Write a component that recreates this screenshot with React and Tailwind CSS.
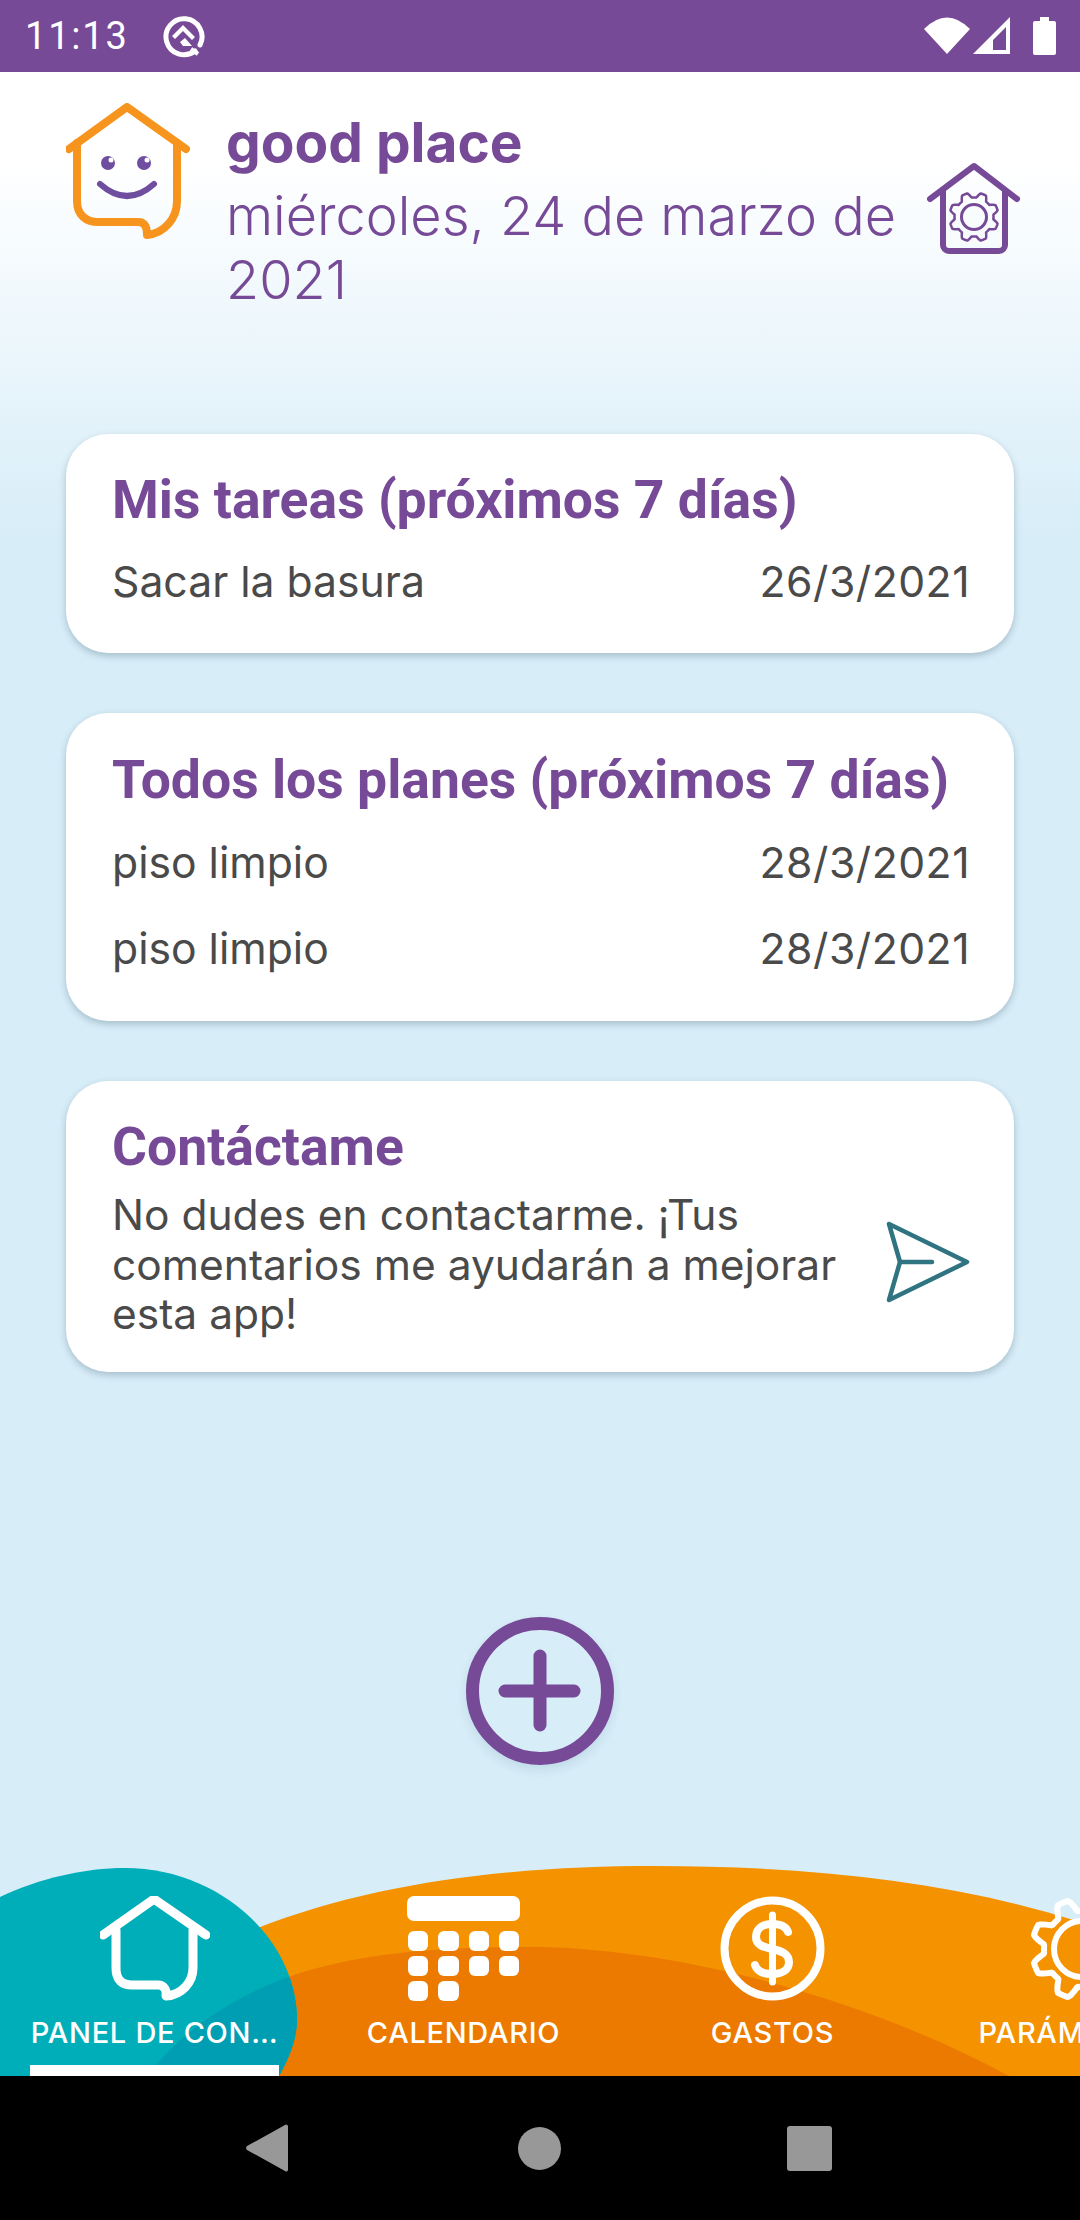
import React from 'react'

const gearPath = (cx, cy, r, amp, teeth) => {
  const pts = []
  for (let i = 0; i < 200; i++) {
    const a = (i / 200) * Math.PI * 2
    const wave = Math.max(-1, Math.min(1, 1.7 * Math.cos(teeth * a + Math.PI)))
    const rad = r + amp * wave
    pts.push(`${(cx + rad * Math.cos(a)).toFixed(2)} ${(cy + rad * Math.sin(a)).toFixed(2)}`)
  }
  return `M${pts.join('L')}Z`
}

const StatusBar = () => (
  <div className="h-[72px] shrink-0 bg-[#764a97] flex items-center text-white">
    <span className="ml-[25px] font-['Roboto'] text-[38px] leading-none tracking-[1.8px]">11:13</span>
    <svg className="ml-[33px]" width="44" height="44" viewBox="0 0 44 44" fill="none">
      <path d="M33 37A18 18 0 1 1 38 31" stroke="white" strokeWidth="5" strokeLinecap="round" />
      <path d="M29 35l7 5" stroke="white" strokeWidth="4" />
      <path d="M10 22L21 11l12 12-3 3-9-9-8 8z" fill="white" />
      <path d="M18 28l5-4 7 8H21z" fill="white" />
    </svg>
    <div className="ml-auto mr-[24px] flex items-center">
      <svg width="46" height="38" viewBox="0 0 46 38"><path d="M23 37L0 12Q23-11 46 12Z" fill="white" /></svg>
      <svg className="ml-[3px]" width="38" height="38" viewBox="0 0 38 38">
        <path fillRule="evenodd" d="M0 37L37 0V37ZM20 33H33V10L20 23Z" fill="white" />
      </svg>
      <svg className="ml-[22px]" width="23" height="38" viewBox="0 0 23 38">
        <path d="M7 0H16V4H21a2 2 0 0 1 2 2V36a2 2 0 0 1-2 2H2a2 2 0 0 1-2-2V6a2 2 0 0 1 2-2H7Z" fill="white" />
      </svg>
    </div>
  </div>
)

const Logo = () => (
  <svg width="124" height="138" viewBox="66 100 124 138" fill="none" className="shrink-0">
    <path d="M69 146L127 104L186 146" stroke="#f7941d" strokeWidth="8" strokeLinecap="round" strokeLinejoin="round" />
    <path d="M77 140V198C77 212 86 219 98 219H138C146 219 147 226 147 232C165 230 177 215 177 198V140" stroke="#f7941d" strokeWidth="8" strokeLinecap="round" strokeLinejoin="round" />
    <circle cx="108" cy="160" r="7" fill="#6f4ea0" />
    <circle cx="144" cy="160" r="7" fill="#6f4ea0" />
    <circle cx="111" cy="157" r="2.5" fill="white" />
    <circle cx="147" cy="157" r="2.5" fill="white" />
    <path d="M100 181Q127 205 154 181" stroke="#6f4ea0" strokeWidth="6" strokeLinecap="round" />
  </svg>
)

const SettingsHome = () => (
  <svg width="94" height="94" viewBox="927 161 94 94" fill="none" className="shrink-0">
    <path d="M930 198L974 165L1017 198" stroke="#764a97" strokeWidth="6" strokeLinecap="round" strokeLinejoin="round" />
    <path d="M943 190V244a6 6 0 0 0 6 6H999a6 6 0 0 0 6-6V190" stroke="#764a97" strokeWidth="6" />
    <path d={gearPath(974, 216, 22, 2.5, 8)} stroke="#764a97" strokeWidth="2.5" strokeLinejoin="round" />
    <circle cx="974" cy="216" r="12.5" stroke="#764a97" strokeWidth="3" />
  </svg>
)

const Card = ({ title, className, children }) => (
  <div className={`mx-[66px] rounded-[42px] bg-white pl-[46px] pr-[44px] shadow-[0_3px_7px_rgba(40,70,90,0.28)] ${className}`}>
    <h2 className="font-['Roboto'] text-[53.5px] leading-[56px] font-bold text-[#764a97] whitespace-nowrap">{title}</h2>
    {children}
  </div>
)

const Row = ({ label, date, className }) => (
  <div className={`flex justify-between font-['Inter'] text-[42.7px] leading-[48px] text-[#4a4a4a] ${className}`}>
    <span>{label}</span>
    <span className="tracking-[0.5px]">{date}</span>
  </div>
)

const HomeTabIcon = () => (
  <svg width="110" height="105" viewBox="100 1896 110 105" fill="none">
    <path d="M103 1935L154 1899L206 1935" stroke="white" strokeWidth="9" strokeLinecap="round" strokeLinejoin="round" />
    <path d="M116 1930V1968C116 1980 122 1985 132 1985H158C164 1985 167 1990 166 1996C182 1995 193 1982 193 1968V1930" stroke="white" strokeWidth="9" strokeLinecap="round" strokeLinejoin="round" />
  </svg>
)

const CalendarIcon = () => (
  <div className="w-[113px] h-[105px] flex flex-col">
    <div className="h-[26px] bg-white rounded-[7px]" />
    <div className="mt-[10px] grid grid-cols-4 gap-x-[10px] gap-y-[5px] px-[1px]">
      {[...Array(10)].map((_, i) => (
        <div key={i} className="h-[20px] rounded-[6px] bg-white" />
      ))}
    </div>
  </div>
)

const DollarIcon = () => (
  <svg width="105" height="105" viewBox="0 0 105 105" fill="none">
    <circle cx="52.5" cy="52.5" r="48" stroke="white" strokeWidth="8" />
    <path d="M52.5 19V86" stroke="white" strokeWidth="7" strokeLinecap="round" />
    <path d="M68 36C66 30 60 28 52 28C42 28 36 33 36 41C36 49 43 51 52 53C62 55 69 58 69 66C69 74 62 78 52 78C43 78 37 75 35 69" stroke="white" strokeWidth="8" strokeLinecap="round" />
  </svg>
)

const GearIcon = () => (
  <svg width="110" height="110" viewBox="-55 -55 110 110" fill="none">
    <path d={gearPath(0, 0, 44, 6, 8)} stroke="white" strokeWidth="6" strokeLinejoin="round" />
    <circle cx="0" cy="0" r="28" stroke="white" strokeWidth="6" />
  </svg>
)

const tabs = [
  { label: 'PANEL DE CON…', icon: <HomeTabIcon />, active: true },
  { label: 'CALENDARIO', icon: <CalendarIcon /> },
  { label: 'GASTOS', icon: <DollarIcon /> },
  { label: 'PARÁMETROS', icon: <GearIcon /> },
]

const TabBar = () => (
  <div className="relative h-[211px] shrink-0 overflow-hidden">
    <svg className="absolute inset-0" width="1080" height="211" viewBox="0 1865 1080 211">
      <defs>
        <clipPath id="teal-shape">
          <path d="M0 1897C40 1878 85 1868 125 1868C220 1868 297 1940 297 2020C297 2040 288 2060 279 2076H0Z" />
        </clipPath>
      </defs>
      <path d="M180 1965C320 1885 500 1866 654 1866C800 1866 950 1880 1080 1922V2076H180Z" fill="#f49200" />
      <path d="M147 2076C190 2020 250 1990 294 1975C370 1950 460 1947 530 1947C650 1947 840 1985 1009 2076Z" fill="#ec7a00" />
      <path d="M0 1897C40 1878 85 1868 125 1868C220 1868 297 1940 297 2020C297 2040 288 2060 279 2076H0Z" fill="#00aeb9" />
      <path clipPath="url(#teal-shape)" d="M147 2076C190 2020 250 1990 294 1975L340 1960V2076Z" fill="#009eb2" />
    </svg>
    <div className="relative flex">
      {tabs.map((tab) => (
        <div key={tab.label} className="relative w-[309px] h-[211px] shrink-0 flex flex-col items-center pt-[31px]">
          <div className="h-[105px] flex items-center justify-center">{tab.icon}</div>
          <span className="mt-[15px] font-['Inter'] text-[29px] leading-[34px] font-medium tracking-[0.7px] text-white whitespace-nowrap">{tab.label}</span>
          {tab.active && <div className="absolute left-[30px] right-[30px] bottom-0 h-[11px] bg-white" />}
        </div>
      ))}
    </div>
  </div>
)

const NavBar = () => (
  <div className="h-[144px] shrink-0 bg-black flex items-center">
    <svg className="ml-[245px]" width="44" height="50" viewBox="0 0 44 50">
      <path d="M40 2a2 2 0 0 1 3 1V47a2 2 0 0 1-3 1L2 27a3 3 0 0 1 0-4Z" fill="#989898" />
    </svg>
    <div className="ml-[229px] w-[43px] h-[43px] rounded-full bg-[#989898]" />
    <div className="ml-[226px] w-[45px] h-[45px] rounded-[3px] bg-[#989898]" />
  </div>
)

export default function App() {
  return (
    <div className="w-[1080px] h-[2220px] flex flex-col overflow-hidden bg-[#d7edf8]">
      <StatusBar />
      <main className="flex-1 bg-linear-to-b from-white from-[5%] to-[#d7edf8] to-[26%]">
        <header className="flex items-start pl-[66px] pt-[31px]">
          <Logo />
          <div className="ml-[36px] w-[680px] font-['Inter'] text-[#764a97]">
            <div className="text-[55px] leading-[60px] font-bold mt-[9px]">good place</div>
            <div className="text-[54px] leading-[64px] font-light mt-[12px]">miércoles, 24 de marzo de 2021</div>
          </div>
          <div className="mt-[59px] ml-[21px]"><SettingsHome /></div>
        </header>

        <Card title="Mis tareas (próximos 7 días)" className="mt-[122px] h-[219px] pt-[38px]">
          <Row label="Sacar la basura" date="26/3/2021" className="mt-[30px]" />
        </Card>

        <Card title="Todos los planes (próximos 7 días)" className="mt-[60px] h-[308px] pt-[39px]">
          <Row label="piso limpio" date="28/3/2021" className="mt-[31px]" />
          <Row label="piso limpio" date="28/3/2021" className="mt-[38px]" />
        </Card>

        <Card title="Contáctame" className="mt-[60px] h-[291px] pt-[38px]">
          <div className="flex items-center mt-[15px]">
            <p className="w-[750px] font-['Inter'] text-[42.5px] leading-[49.5px] text-[#4a4a4a]">No dudes en contactarme. ¡Tus comentarios me ayudarán a mejorar esta app!</p>
            <svg className="ml-auto mt-[-4px]" width="84" height="82" viewBox="0 0 84 82" fill="none">
              <path d="M3 3L81 41L3 79L14 41Z" stroke="#2f7480" strokeWidth="4.5" strokeLinejoin="round" />
              <path d="M14 41H46" stroke="#2f7480" strokeWidth="4.5" strokeLinecap="round" />
            </svg>
          </div>
        </Card>

        <div className="mt-[245px] flex justify-center">
          <div className="w-[148px] h-[148px] rounded-full shadow-[0_5px_10px_rgba(60,110,140,0.14)]">
            <svg width="148" height="148" viewBox="0 0 148 148" fill="none">
              <circle cx="74" cy="74" r="67.5" stroke="#764a97" strokeWidth="13" />
              <path d="M74 39V108M39 74H108" stroke="#764a97" strokeWidth="13" strokeLinecap="round" />
            </svg>
          </div>
        </div>
      </main>
      <TabBar />
      <NavBar />
    </div>
  )
}
